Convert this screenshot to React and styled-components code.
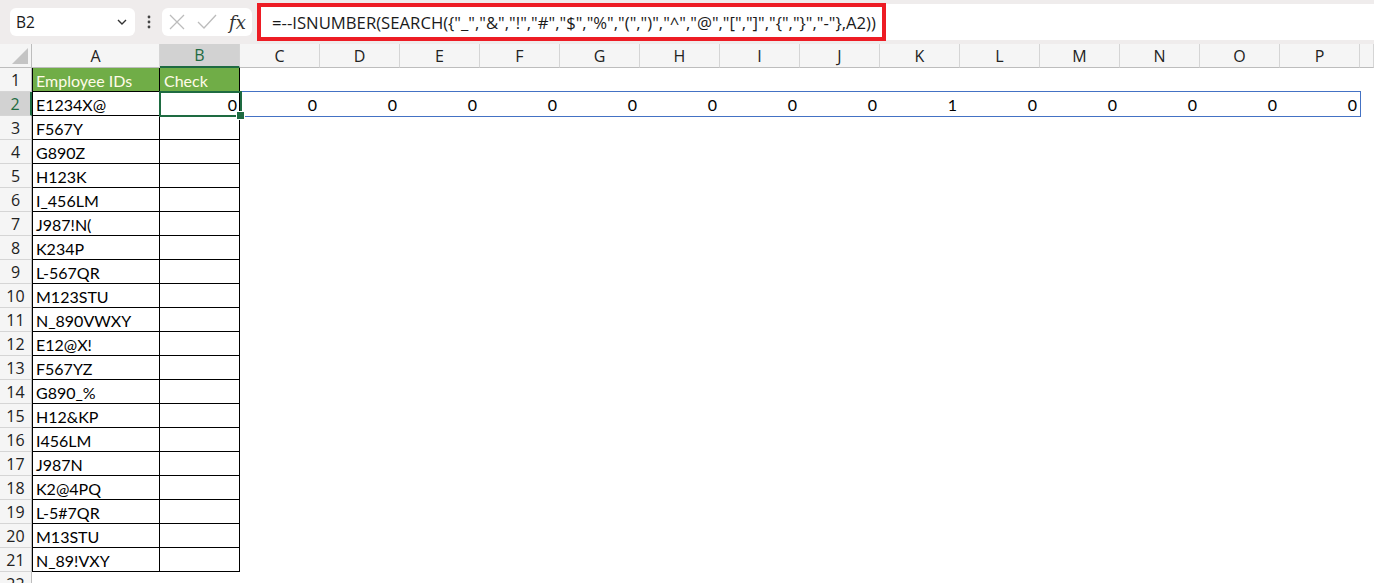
import React from "react";
import styled, { createGlobalStyle } from "styled-components";

const GlobalStyle = createGlobalStyle`
  html, body { margin: 0; padding: 0; background: #fff; }
  body { font-family: "Open Sans", "Liberation Sans", sans-serif; overflow: hidden; }
`;

const COLS = ["A", "B", "C", "D", "E", "F", "G", "H", "I", "J", "K", "L", "M", "N", "O", "P"];
const IDS = [
  "E1234X@", "F567Y", "G890Z", "H123K", "I_456LM", "J987!N(", "K234P", "L-567QR",
  "M123STU", "N_890VWXY", "E12@X!", "F567YZ", "G890_%", "H12&KP", "I456LM",
  "J987N", "K2@4PQ", "L-5#7QR", "M13STU", "N_89!VXY",
];
const ROW2 = [0, 0, 0, 0, 0, 0, 0, 0, 1, 0, 0, 0, 0, 0];
const FORMULA = '=--ISNUMBER(SEARCH({"_","&","!","#","$","%","(",")","^","@","[","]","{","}","-"},A2))';

//formula bar at the top
const Toolbar = styled.div`
  display: flex;
  align-items: center;
  height: 44px;
  background: #efecec;
  padding-left: 10px;
  box-sizing: border-box;
`;

const NameBox = styled.div`
  display: flex;
  align-items: center;
  justify-content: space-between;
  width: 125px;
  height: 28px;
  background: #fff;
  border-radius: 6px;
  box-sizing: border-box;
  padding: 0 6px 0 6px;
  font-size: 15.5px;
  color: #1a1a1a;
`;

const Dots = styled.div`
  width: 27px;
  display: flex;
  justify-content: center;
`;

const FuncBox = styled.div`
  display: flex;
  align-items: center;
  gap: 10px;
  width: 90px;
  height: 28px;
  background: #fff;
  border-radius: 6px;
  box-sizing: border-box;
  padding: 0 6px 0 6px;
`;

const Fx = styled.span`
  font-family: "DejaVu Serif", "Liberation Serif", serif;
  font-style: italic;
  font-size: 18px;
  color: #333;
  margin-left: 1px;
`;

const FormulaInput = styled.div`
  flex: 1;
  height: 36px;
  margin-left: 5px;
  background: #fff;
  display: flex;
  align-items: center;
`;

const Highlight = styled.div`
  width: 629px;
  height: 38px;
  border: 4px solid #ed1c24;
  box-sizing: border-box;
  display: flex;
  align-items: center;
  padding-left: 11px;
  font-size: 16.7px;
  color: #1a1a1a;
  white-space: nowrap;
`;

//sheet grid
const Sheet = styled.div`
  position: relative;
  display: grid;
  grid-template-columns: 32px 128px repeat(15, 80px) 1fr;
  grid-auto-rows: 24px;
`;

const ColHead = styled.div`
  background: ${(p) => (p.$active ? "#d2d2d2" : "#f5f5f5")};
  color: ${(p) => (p.$active ? "#1e6b41" : "#222")};
  border-right: 1px solid #d5d5d5;
  border-bottom: ${(p) => (p.$active ? "2px solid #1e6b41" : "1px solid #bdbdbd")};
  box-sizing: border-box;
  display: flex;
  align-items: center;
  justify-content: center;
  font-size: 16px;
`;

const Corner = styled.div`
  position: relative;
  background: #f5f5f5;
  border-right: 1px solid #bdbdbd;
  border-bottom: 1px solid #bdbdbd;
  box-sizing: border-box;
`;

const Triangle = styled.div`
  position: absolute;
  right: 3px;
  bottom: 3px;
  width: 0;
  height: 0;
  border-left: 16px solid transparent;
  border-bottom: 16px solid #c4c4c4;
`;

const RowHead = styled.div`
  background: ${(p) => (p.$active ? "#d2d2d2" : "#f5f5f5")};
  color: ${(p) => (p.$active ? "#1e6b41" : "#222")};
  border-right: ${(p) => (p.$active ? "2px solid #1e6b41" : "1px solid #bdbdbd")};
  border-bottom: 1px solid #d5d5d5;
  box-sizing: border-box;
  display: flex;
  align-items: center;
  justify-content: center;
  font-size: 16px;
`;

const Cell = styled.div`
  box-sizing: border-box;
  display: flex;
  align-items: center;
  justify-content: ${(p) => (p.$right ? "flex-end" : "flex-start")};
  padding: 0 3px 0 4px;
  font-family: "Lato", "Open Sans", sans-serif;
  font-size: 16px;
  color: ${(p) => (p.$head ? "#fffbe8" : "#000")};
  background: ${(p) => (p.$head ? "#70ad47" : "#fff")};
  box-shadow: ${(p) =>
    p.$table
      ? `inset -1px -1px 0 #000${p.$first ? ", inset 1px 0 0 #000" : ""}`
      : "none"};
  white-space: nowrap;
`;

const Spill = styled.div`
  position: absolute;
  left: 160px;
  top: 47px;
  width: 1201px;
  height: 26px;
  border: 1px solid #4472c4;
  box-sizing: border-box;
  pointer-events: none;
`;

const Selection = styled.div`
  position: absolute;
  left: 159px;
  top: 47px;
  width: 83px;
  height: 26px;
  border: 2px solid #1e6b41;
  box-sizing: border-box;
`;

const Handle = styled.div`
  position: absolute;
  right: -5px;
  bottom: -5px;
  width: 7px;
  height: 7px;
  background: #1e6b41;
  border: 1px solid #fff;
`;

function Chevron() {
  return (
    <svg width="14" height="14" viewBox="0 0 14 14">
      <path d="M3 5 L7 9 L11 5" fill="none" stroke="#333" strokeWidth="1.4" />
    </svg>
  );
}

function VDots() {
  return (
    <svg width="4" height="16" viewBox="0 0 4 16">
      <circle cx="2" cy="3" r="1.4" fill="#444" />
      <circle cx="2" cy="8" r="1.4" fill="#444" />
      <circle cx="2" cy="13" r="1.4" fill="#444" />
    </svg>
  );
}

function Cross() {
  return (
    <svg width="18" height="18" viewBox="0 0 18 18">
      <path d="M2 2 L16 16 M16 2 L2 16" stroke="#bcbcbc" strokeWidth="1.3" />
    </svg>
  );
}

function Tick() {
  return (
    <svg width="22" height="18" viewBox="0 0 22 18">
      <path d="M2 9 L8 15 L20 2" fill="none" stroke="#bcbcbc" strokeWidth="1.3" />
    </svg>
  );
}

export default function App() {
  const rows = [];
  for (let r = 1; r <= 22; r++) {
    const cells = [<RowHead key="h" $active={r === 2}>{r}</RowHead>];
    COLS.forEach((c, i) => {
      let text = "";
      let table = r <= 21 && i < 2;
      let head = r === 1 && i < 2;
      let right = false;
      if (r === 1 && i === 0) text = "Employee IDs";
      if (r === 1 && i === 1) text = "Check";
      if (r >= 2 && r <= 21 && i === 0) text = IDS[r - 2];
      if (r === 2 && i === 1) { text = "0"; right = true; }
      if (r === 2 && i >= 2) { text = String(ROW2[i - 2]); right = true; }
      cells.push(
        <Cell key={c} $table={table} $first={i === 0} $head={head} $right={right}>
          {text}
        </Cell>
      );
    });
    cells.push(<Cell key="rest" />);
    rows.push(<React.Fragment key={r}>{cells}</React.Fragment>);
  }

  return (
    <>
      <GlobalStyle />
      <Toolbar>
        <NameBox>
          <span>B2</span>
          <Chevron />
        </NameBox>
        <Dots>
          <VDots />
        </Dots>
        <FuncBox>
          <Cross />
          <Tick />
          <Fx>fx</Fx>
        </FuncBox>
        <FormulaInput>
          <Highlight>{FORMULA}</Highlight>
        </FormulaInput>
      </Toolbar>
      <Sheet>
        <Corner>
          <Triangle />
        </Corner>
        {COLS.map((c) => (
          <ColHead key={c} $active={c === "B"}>{c}</ColHead>
        ))}
        <ColHead />
        {rows}
        <Spill />
        <Selection>
          <Handle />
        </Selection>
      </Sheet>
    </>
  );
}
